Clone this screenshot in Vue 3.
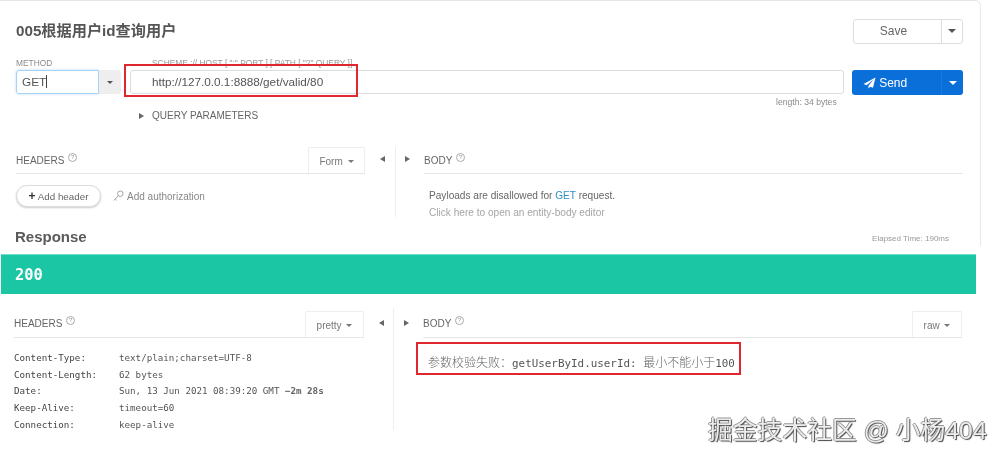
<script setup>
const headers = [
  ['Content-Type:', 'text/plain;charset=UTF-8'],
  ['Content-Length:', '62 bytes'],
  ['Date:', 'Sun, 13 Jun 2021 08:39:20 GMT'],
  ['Keep-Alive:', 'timeout=60'],
  ['Connection:', 'keep-alive'],
]
</script>

<template>
  <div class="page">
    <section class="request">
      <div class="title-row">
        <h1>005根据用户id查询用户</h1>
        <div class="save">
          <span class="save-main">Save</span>
          <span class="save-drop"><i class="caret dark"></i></span>
        </div>
      </div>

      <div class="labels">
        <span class="lab-method">METHOD</span>
        <span class="lab-url">SCHEME :// HOST [ ":" PORT ] [ PATH [ "?" QUERY ]]</span>
      </div>

      <div class="url-row">
        <div class="method">
          <span class="method-input">GET<b class="cursor"></b></span>
          <span class="method-drop"><i class="caret dark"></i></span>
        </div>
        <div class="url-input">http://127.0.0.1:8888/get/valid/80</div>
        <div class="send">
          <span class="send-main">
            <svg width="13" height="12" viewBox="0 0 15 14"><path d="M14.5 0.5 0.5 8.2 4.2 9.6 12 3 6.2 10.4 6.2 13.5 8.4 11.3 11.6 12.6Z" fill="#fff"/></svg>
            Send
          </span>
          <span class="send-drop"><i class="caret white"></i></span>
        </div>
      </div>

      <div class="length">length: 34 bytes</div>

      <div class="query"><i class="tri right"></i>QUERY PARAMETERS</div>

      <div class="split req-split">
        <div class="pane left">
          <div class="pane-head">
            <span class="pane-title">HEADERS <span class="help">?</span></span>
            <span class="tab form-tab">Form <i class="caret grey"></i></span>
          </div>
          <div class="actions">
            <button class="pill"><span class="plus">+</span> Add header</button>
            <span class="auth">
              <svg width="11" height="12" viewBox="0 0 12 13" fill="none" stroke="#999" stroke-width="1"><circle cx="8" cy="4" r="3"/><path d="M5.8 6.2 1 11.5M2.5 9.8 4 11.2"/></svg>
              Add authorization
            </span>
          </div>
        </div>
        <div class="toggles">
          <i class="tri left"></i>
          <i class="rule"></i>
          <i class="tri right"></i>
        </div>
        <div class="pane right">
          <div class="pane-head">
            <span class="pane-title">BODY <span class="help">?</span></span>
          </div>
          <p class="payload">Payloads are disallowed for <span class="get">GET</span> request.</p>
          <p class="editor">Click here to open an entity-body editor</p>
        </div>
      </div>

      <div class="response-head">
        <h2>Response</h2>
        <span class="elapsed">Elapsed Time: 190ms</span>
      </div>
    </section>

    <div class="status">200</div>

    <div class="split res-split">
      <div class="pane left">
        <div class="pane-head">
          <span class="pane-title">HEADERS <span class="help">?</span></span>
          <span class="tab pretty-tab">pretty <i class="caret grey"></i></span>
        </div>
        <dl class="hdrs">
          <div v-for="h in headers" :key="h[0]" class="hdr">
            <dt>{{ h[0] }}</dt>
            <dd>{{ h[1] }}<b v-if="h[0] === 'Date:'" class="ago"> −2m 28s</b></dd>
          </div>
        </dl>
      </div>
      <div class="toggles">
        <i class="tri left"></i>
        <i class="rule"></i>
        <i class="tri right"></i>
      </div>
      <div class="pane right">
        <div class="pane-head">
          <span class="pane-title">BODY <span class="help">?</span></span>
          <span class="tab raw-tab">raw <i class="caret grey"></i></span>
        </div>
        <div class="body-text"><span class="cjk">参数校验失败：</span>getUserById.userId: <span class="cjk">最小不能小于</span>100</div>
      </div>
    </div>

    <div class="mark mark-url"></div>
    <div class="mark mark-body"></div>
    <div class="watermark">掘金技术社区 @ 小杨404</div>
  </div>
</template>

<style>
html, body { margin: 0; background: #fff; }
</style>

<style scoped>
.page {
  position: relative;
  width: 1001px;
  height: 459px;
  overflow: hidden;
  background: #fff;
  font-family: "Liberation Sans", "Noto Sans CJK SC", sans-serif;
  color: #666;
  filter: blur(0.35px);
}
.request {
  box-sizing: border-box;
  display: flex;
  flex-direction: column;
  width: 981px;
  height: 246px;
  border-top: 1px solid #e6e6e6;
  border-right: 1px solid #e8e8e8;
  border-top-right-radius: 6px;
  padding: 18px 17px 0 16px;
}
.title-row { display: flex; justify-content: space-between; align-items: center; height: 24px; }
h1 { margin: -4px 0 0; font-size: 15.2px; font-weight: 700; color: #555; }
.save { display: flex; width: 110px; height: 25px; box-sizing: border-box; border: 1px solid #ddd; border-radius: 3px; }
.save-main { flex: 1; box-sizing: border-box; padding-right: 8px; text-align: center; font-size: 12px; line-height: 23px; color: #666; border-right: 1px solid #ddd; }
.save-drop { width: 20px; display: flex; align-items: center; justify-content: center; }
.caret { display: inline-block; width: 0; height: 0; border-left: 4px solid transparent; border-right: 4px solid transparent; border-top: 4px solid #555; }
.caret.dark { border-top-color: #555; }
.caret.white { border-top-color: #fff; }
.caret.grey { border-left-width: 3px; border-right-width: 3px; border-top: 3px solid #777; vertical-align: 2px; margin-left: 2px; }

.labels { display: flex; height: 14px; margin-top: 13px; font-size: 8.4px; line-height: 14px; color: #8c8c8c; }
.lab-method { width: 136px; }
.lab-url { font-size: 8.4px; color: #999; }

.url-row { display: flex; height: 25px; flex: none; }
.method { display: flex; width: 105px; height: 24px; }
.method-input { box-sizing: border-box; width: 83px; border: 1px solid #a6d3f5; box-shadow: 0 0 3px #bcdcf5; border-radius: 3px 0 0 3px; padding-left: 5px; font-size: 11.8px; line-height: 22px; color: #555; }
.cursor { display: inline-block; width: 1px; height: 13px; background: #444; vertical-align: -2px; }
.method-drop { width: 22px; background: #eee; display: flex; align-items: center; justify-content: center; border-radius: 0 3px 3px 0; }
.method-drop .caret { border-left-width: 3px; border-right-width: 3px; border-top-width: 3px; }
.url-input { box-sizing: border-box; width: 715px; height: 24px; margin-left: 9px; border: 1px solid #ddd; border-radius: 3px; padding-left: 21px; font-size: 11.75px; line-height: 22px; color: #555; }
.send { display: flex; width: 111px; height: 25px; margin-left: 8px; background: #0a6fd8; border-radius: 3px; color: #fff; }
.send-main { flex: 1; display: flex; align-items: center; gap: 3px; padding-left: 11px; font-size: 12px; border-right: 1px solid #1a7adb; }
.send-drop { width: 21px; display: flex; align-items: center; justify-content: center; }

.length { height: 13px; margin-top: 1px; padding-left: 760px; font-size: 8.6px; line-height: 13px; color: #8a8a8a; }
.query { display: flex; align-items: center; height: 14px; padding-left: 123px; font-size: 10px; line-height: 14px; color: #666; }
.query .tri { margin-right: 8px; }

.tri { display: inline-block; width: 0; height: 0; border-top: 3.5px solid transparent; border-bottom: 3.5px solid transparent; }
.tri.right { border-left: 5px solid #666; }
.tri.left { border-right: 5px solid #666; }

.split { display: flex; }
.req-split { margin-top: 24px; height: 70px; }
.pane { box-sizing: border-box; }
.pane.left { width: 349px; flex: none; }
.pane.right { flex: 1; }
.pane-head { display: flex; justify-content: space-between; align-items: flex-end; height: 27px; box-sizing: border-box; border-bottom: 1px solid #e6e6e6; }
.pane-title { font-size: 10px; line-height: 14px; padding-bottom: 5px; color: #666; }
.help { display: inline-block; box-sizing: border-box; width: 9px; height: 9px; border: 1px solid #aaa; border-radius: 50%; font-size: 6px; line-height: 7px; text-align: center; vertical-align: 5px; color: #999; margin-left: 1px; }
.tab { box-sizing: border-box; height: 26px; border: 1px solid #eee; border-bottom: none; border-radius: 2px 2px 0 0; font-size: 10px; line-height: 27px; text-align: center; color: #777; }
.form-tab { width: 57px; }
.pretty-tab { width: 59px; }
.raw-tab { width: 50px; }

.actions { display: flex; align-items: center; gap: 12px; margin-top: 11px; }
.pill { box-sizing: border-box; width: 85px; height: 22px; padding: 0; background: #fff; border: 1px solid #ddd; border-radius: 11px; box-shadow: 0 1px 2px #ccc; font: 9.8px "Liberation Sans", sans-serif; color: #666; }
.plus { font-weight: 700; font-size: 12px; color: #333; line-height: 1; }
.auth { display: flex; align-items: center; gap: 3px; font-size: 10px; color: #888; }

.toggles { position: relative; width: 59px; flex: none; display: flex; justify-content: space-between; align-items: flex-start; padding: 9px 14px 0 15px; box-sizing: border-box; }
.rule { position: absolute; left: 30px; top: 0; bottom: 0; width: 1px; background: #eee; }

.payload, .editor { margin: 0; padding-left: 5px; font-size: 10.1px; line-height: 14px; }
.payload { margin-top: 15px; color: #666; }
.editor { margin-top: 3px; color: #a5a5a5; }
.get { color: #2a8fc7; }

.response-head { display: flex; justify-content: space-between; align-items: flex-end; margin-top: auto; margin-left: -1px; margin-right: 14px; height: 18px; flex: none; }
h2 { margin: 0; font-size: 15px; line-height: 18px; font-weight: 700; color: #5a5a5a; }
.elapsed { font-size: 8px; line-height: 10px; margin-bottom: 2px; color: #999; }
.status { box-sizing: border-box; width: 975px; height: 40px; margin: 8px 0 0 1px; padding-left: 14px; background: #1ac6a3; font: 700 15.4px/41px "DejaVu Sans Mono", monospace; color: #fff; border-top: 1px solid #6fe0c8; }

.res-split { margin-top: 14px; padding-left: 14px; width: 962px; box-sizing: border-box; }
.res-split .pane.left { width: 350px; }
.res-split .pane-head { height: 30px; }
.res-split .pane-title { padding-bottom: 6px; }
.res-split .tab { height: 26px; }

.hdrs { margin: 12px 0 0; font: 9.2px/16.7px "DejaVu Sans Mono", monospace; color: #444; }
.hdr { display: flex; }
dt { width: 105px; }
dd { margin: 0; color: #555; }
.ago { font-weight: 700; color: #666; }

.res-split .toggles { padding-top: 12px; }
.res-split .toggles .rule { left: 29px; height: 122px; bottom: auto; }
.body-text { margin: 16px 0 0 5px; font: 10.9px/16px "DejaVu Sans Mono", "Noto Sans CJK SC", monospace; color: #555; white-space: nowrap; }
.cjk { font-family: "Noto Sans CJK SC", sans-serif; font-size: 12px; font-weight: 300; color: #666; }

.mark { position: absolute; box-sizing: border-box; border: 2px solid #e0262f; }
.mark-url { left: 124px; top: 64px; width: 234px; height: 33px; }
.mark-body { left: 416px; top: 342px; width: 325px; height: 33px; }
.watermark { position: absolute; left: 708px; top: 415px; font-size: 24.8px; line-height: 32px; white-space: nowrap; color: #ececec; text-shadow: 1px 1px 1px #444, -1px 0 0 #999, 0 -1px 0 #999; }
</style>
